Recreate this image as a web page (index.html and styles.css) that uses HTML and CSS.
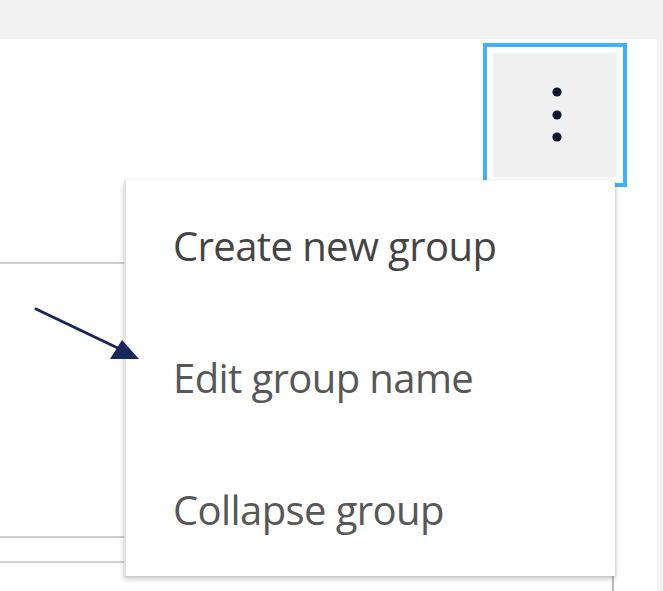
FILE: index.html
```html
<!DOCTYPE html>
<html lang="en">
<head>
<meta charset="utf-8">
<title>Group menu</title>
<link rel="stylesheet" href="styles.css">
</head>
<body>
<div class="topbar"></div>
<div class="panel">
  <div class="header">
    <button class="more-btn" aria-label="More options">
      <span class="more-inner">
        <svg width="14" height="60" viewBox="0 0 14 60" aria-hidden="true">
          <circle cx="7" cy="7" r="4.6" fill="#0d1630"/>
          <circle cx="7" cy="30" r="4.6" fill="#0d1630"/>
          <circle cx="7" cy="52" r="4.6" fill="#0d1630"/>
        </svg>
      </span>
    </button>
  </div>
  <div class="table">
    <div class="row row-tall"></div>
    <div class="row row-short"></div>
    <div class="row row-rest"></div>
  </div>

  <ul class="menu">
    <li class="menu-item first">Create new group</li>
    <li class="menu-item">Edit group name</li>
    <li class="menu-item">Collapse group</li>
  </ul>

  <svg class="arrow" width="120" height="70" viewBox="0 0 120 70" aria-hidden="true">
    <line x1="2" y1="2" x2="90" y2="44" stroke="#17275a" stroke-width="3" stroke-linecap="round"/>
    <polygon points="105,52 76,52 88,33" fill="#17275a"/>
  </svg>
</div>
</body>
</html>
```

FILE: styles.css
```css
* { box-sizing: border-box; }

html, body {
  margin: 0;
  padding: 0;
  background: #f2f2f2;
  height: 591px;
  overflow: hidden;
  font-family: "Open Sans", "Noto Sans", sans-serif;
}

.topbar {
  height: 39px;
}

.panel {
  position: relative;
  background: #ffffff;
  margin-right: 6px;
  height: 552px;
  border-radius: 0 3px 0 0;
}

.header {
  height: 223px;
  display: flex;
  justify-content: flex-end;
  align-items: flex-start;
  padding-top: 4px;
  padding-right: 30px;
}

.more-btn {
  width: 144px;
  height: 144px;
  padding: 6px;
  margin: 0;
  border: 4px solid #3fb0ff;
  background: #ffffff;
  display: flex;
  cursor: pointer;
}

.more-inner {
  flex: 1;
  background: #f0f0f0;
  display: flex;
  align-items: center;
  justify-content: center;
}

.more-inner svg {
  display: block;
  margin-left: 3px;
}

.table {
  width: 614px;
  border-top: 2px solid #cfcfcf;
  border-right: 2px solid #bdbdbd;
  height: 329px;
  display: flex;
  flex-direction: column;
}

.row-tall {
  height: 274px;
  border-bottom: 2px solid #cfcfcf;
}

.row-short {
  height: 25px;
  border-bottom: 2px solid #cfcfcf;
}

.row-rest {
  flex: 1;
}

.menu {
  position: absolute;
  left: 124px;
  top: 141px;
  width: 491px;
  height: 396px;
  margin: 0;
  padding: 0;
  list-style: none;
  background: #ffffff;
  border-left: 2px solid #e2e2e2;
  box-shadow: 0 3px 5px rgba(0, 0, 0, 0.22), 1px 0 3px rgba(0, 0, 0, 0.08);
}

.menu-item {
  height: 132px;
  line-height: 132px;
  padding-left: 47px;
  font-size: 40px;
  letter-spacing: -0.6px;
  color: #575757;
  white-space: nowrap;
}

.menu-item.first {
  color: #444444;
}

.arrow {
  position: absolute;
  left: 34px;
  top: 268px;
}
```
